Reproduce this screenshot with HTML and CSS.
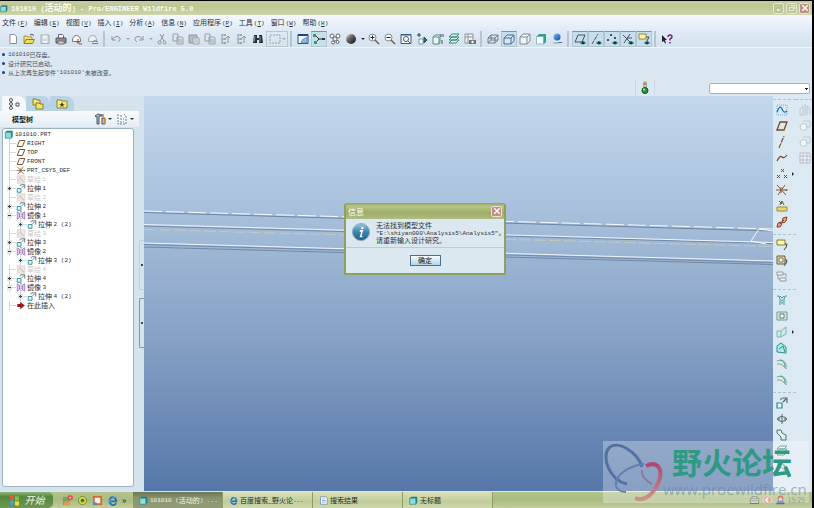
FILE: index.html
```
<!DOCTYPE html>
<html lang="zh-CN">
<head>
<meta charset="utf-8">
<title>101010 (活动的) - Pro/ENGINEER Wildfire 5.0</title>
<link rel="stylesheet" href="styles.css">
</head>
<body>
<svg class="defs" aria-hidden="true">
<defs>
<linearGradient id="ball" x1="0" y1="0" x2="1" y2="1"><stop offset="0" stop-color="#eee"/><stop offset=".4" stop-color="#666"/><stop offset="1" stop-color="#111"/></linearGradient>
<linearGradient id="blueball" x1="0" y1="0" x2="1" y2="1"><stop offset="0" stop-color="#7fb8ee"/><stop offset="1" stop-color="#0c4ca8"/></linearGradient>
<linearGradient id="info" x1="0" y1="0" x2="0" y2="1"><stop offset="0" stop-color="#9cc6dc"/><stop offset=".5" stop-color="#3a86b0"/><stop offset="1" stop-color="#1c5c8c"/></linearGradient>
<linearGradient id="loop" x1="0" y1="0" x2="0" y2="1"><stop offset="0" stop-color="#b0406c"/><stop offset="1" stop-color="#d08c84"/></linearGradient>
</defs>
<symbol id="new" viewBox="0 0 12 12"><path d="M3 1.500h4.500l2 2v7H3z" fill="#fff" stroke="#888f96"/></symbol>
<symbol id="open" viewBox="0 0 12 12"><path d="M1 10V3h3l1 1h4v2" fill="#f4e48c" stroke="#a89438"/><path d="M1 10.500l2-4h8.500l-2 4z" fill="#f6dc50" stroke="#8f8030"/><path d="M7 2q2-1.500 4 .5" fill="none" stroke="#555"/></symbol>
<symbol id="save" viewBox="0 0 12 12"><path d="M2 2h8v8.500H2z" fill="#d5dce1" stroke="#a4adb5"/><path d="M4 2.500h4v3H4zM4 8h4v2H4z" fill="#eef2f4"/></symbol>
<symbol id="print" viewBox="0 0 12 12"><path d="M3.500 5V1.500h4l1 1V5" fill="#fff" stroke="#667"/><path d="M1 5h10v5H1z" fill="#888d94" stroke="#555b62"/><path d="M3 8h6v3H3z" fill="#e7c2b9" stroke="#777"/></symbol>
<symbol id="mail" viewBox="0 0 12 12"><path d="M1.500 7a4 4.500 0 0 1 8 0v1.500h-8z" fill="#f6f7f5" stroke="#777"/><path d="M7 6v4M5.500 8.500L7 10.500l2-2M8 11h3" stroke="#a44" fill="none"/></symbol>
<symbol id="mail2" viewBox="0 0 12 12"><path d="M1.500 7a4 4.500 0 0 1 8 0v1.500h-8z" fill="#eef2f4" stroke="#a0a8ae"/><path d="M5 9q3-3 6 0M5 10.500h6" stroke="#789" fill="none"/></symbol>
<symbol id="undo" viewBox="0 0 12 12"><path d="M2 3v4h4M2 7q4-6 8-2 1 2-2 4" fill="none" stroke="#8c969e"/></symbol>
<symbol id="redo" viewBox="0 0 12 12"><path d="M10 3v4H6M10 7Q6 1 2 5q-1 2 2 4" fill="none" stroke="#8c969e"/></symbol>
<symbol id="cut" viewBox="0 0 12 12"><path d="M4 1l4 7M8 1L4 8" stroke="#8c969e" fill="none"/><circle cx="3.500" cy="9.500" r="1.500" fill="none" stroke="#8c969e"/><circle cx="8.500" cy="9.500" r="1.500" fill="none" stroke="#8c969e"/></symbol>
<symbol id="copy" viewBox="0 0 12 12"><path d="M1 1h5v7H1zM5 4h5l1 1v6H5z" fill="#dfe5e9" stroke="#98a1a8"/><path d="M6 7h4M6 9h4" stroke="#a4abb1"/></symbol>
<symbol id="paste" viewBox="0 0 12 12"><path d="M1 2h8v8H1z" fill="#b5bcc2" stroke="#8f989f"/><path d="M5 5h6v6H5z" fill="#eef1f3" stroke="#98a1a8"/><path d="M6 7h4M6 9h4" stroke="#a4abb1"/></symbol>
<symbol id="regen" viewBox="0 0 12 12"><path d="M2 1v10M2 2h2M2 6h2M2 10h2M8 10V3M6 5l2-2 2 2" fill="none" stroke="#8c969e"/><path d="M4 1h2v2H4zM4 5h2v2H4zM4 9h2v2H4z" fill="#9aa4ab"/></symbol>
<symbol id="find" viewBox="0 0 12 12"><path d="M2 2h3v3h2V2h3l1 8H7V7H5v3H1z" fill="#282c34"/><path d="M3 3l-1 6M8 3v6" stroke="#9299a0"/></symbol>
<symbol id="marquee" viewBox="0 0 12 12"><path d="M1 2h10v8H1z" fill="none" stroke="#98a2aa" stroke-dasharray="2 1"/></symbol>
<symbol id="repaint" viewBox="0 0 12 12"><path d="M1 1.500h10v9H1z" fill="#f5faff" stroke="#244c88"/><path d="M1 1h10v2H1z" fill="#1d438b"/><path d="M4 10q0-4 6-6v6z" fill="#8fbcdc" stroke="#4c7ca8" stroke-width=".6"/></symbol>
<symbol id="spin" viewBox="0 0 12 12"><path d="M2 2l4 4-4 4M6 6h4" fill="none" stroke="#333"/><path d="M0 1h3v3H0zM1 8h3v3H1z" fill="#2fa364"/><path d="M9 5h3v2H9z" fill="#333"/></symbol>
<symbol id="layers" viewBox="0 0 12 12"><g fill="#f4f6f8" stroke="#555c66" stroke-width=".9"><circle cx="3" cy="3" r="2"/><circle cx="9" cy="3" r="2"/><circle cx="6" cy="6" r="2"/><circle cx="4" cy="9.500" r="1.500"/><circle cx="8.500" cy="9" r="1.500"/></g></symbol>
<symbol id="sphere" viewBox="0 0 12 12"><circle cx="6" cy="6" r="5" fill="url(#ball)"/></symbol>
<symbol id="zin" viewBox="0 0 12 12"><circle cx="4.500" cy="4.500" r="3.500" fill="#f3f8fa" stroke="#808992"/><path d="M7 7l4 4" stroke="#86543c" stroke-width="1.500"/><path d="M2.500 4.500h4M4.500 2.500v4" stroke="#223"/></symbol>
<symbol id="zout" viewBox="0 0 12 12"><circle cx="4.500" cy="4.500" r="3.500" fill="#f3f8fa" stroke="#808992"/><path d="M7 7l4 4" stroke="#86543c" stroke-width="1.500"/><path d="M2.500 4.500h4" stroke="#223"/></symbol>
<symbol id="refit" viewBox="0 0 12 12"><path d="M1 1.500h10v9H1z" fill="#eff6fa" stroke="#345c88"/><path d="M1 1h10v1.500H1z" fill="#345c88"/><circle cx="6" cy="6" r="2.500" fill="#fff" stroke="#555"/><path d="M8 8l2 2" stroke="#86543c"/></symbol>
<symbol id="orient" viewBox="0 0 12 12"><path d="M3 6h4v5H3z" fill="#fff" stroke="#5c8c84" stroke-width=".8"/><path d="M3 0v4M1 2h4" stroke="#25495c"/><path d="M8 4l3 3-3 3z" fill="#277d70" stroke="#25495c"/></symbol>
<symbol id="views" viewBox="0 0 12 12"><path d="M1 4h6v7H1zM1 4l2-2h5v7l-1 2" fill="#e7f5f3" stroke="#5c8c84"/><path d="M9 1v3M11 1v3M10 7v4" stroke="#456"/></symbol>
<symbol id="stack" viewBox="0 0 12 12"><g fill="#dff1eb" stroke="#3d8577"><path d="M1 10l3-3h7l-3 3zM1 7l3-3h7L8 7zM1 4l3-3h7L8 4z"/></g></symbol>
<symbol id="viewmgr" viewBox="0 0 12 12"><path d="M1 1h8v9H1zM1 4h8M4 1v9" fill="#f1f4f5" stroke="#8b949b"/><path d="M5 7h7v4H5z" fill="#70767d"/><circle cx="8.500" cy="9" r="1.200" fill="#fff"/></symbol>
<symbol id="wire" viewBox="0 0 12 12"><path d="M1 5h7v5H1zM4 2h7v5H4zM1 5l3-3M8 5l3-3M8 10l3-3M1 10l3-3" fill="none" stroke="#66717b" stroke-width=".9"/></symbol>
<symbol id="hidden" viewBox="0 0 12 12"><path d="M1 5h7v6H1zM1 5l3-3h7v6l-3 3M8 5l3-3" fill="#d5e7f4" stroke="#4b6d94"/></symbol>
<symbol id="nohid" viewBox="0 0 12 12"><path d="M1 4h7v7H1zM1 4l3-3h7v7l-3 3M8 4l3-3" fill="#eef4f7" stroke="#838c96"/></symbol>
<symbol id="shade" viewBox="0 0 12 12"><path d="M2 3l2-2h7v8l-2 2H2z" fill="#339f94"/><path d="M1.500 3.500h7V11h-7z" fill="#effffc" stroke="#62a29c" stroke-width=".6"/></symbol>
<symbol id="enh" viewBox="0 0 12 12"><circle cx="6" cy="4" r="3.500" fill="url(#blueball)"/><path d="M7 9h4v1H7z" fill="#567"/><ellipse cx="5" cy="10" rx="3" ry="1" fill="#9cbfe0"/></symbol>
<symbol id="eye" viewBox="0 0 12 12"><path d="M6 10q3-4 6 0-3 3-6 0z" fill="#247d70"/><circle cx="9" cy="10" r="1" fill="#123"/></symbol>
<symbol id="dplane" viewBox="0 0 12 12"><path d="M1 9l3-7h7L8 9z" fill="none" stroke="#4a5260"/><use href="#eye"/></symbol>
<symbol id="daxis" viewBox="0 0 12 12"><path d="M2 11L8 1" fill="none" stroke="#4a5260" stroke-dasharray="4 1"/><use href="#eye"/></symbol>
<symbol id="dpoint" viewBox="0 0 12 12"><path d="M4 1l2 2M6 1L4 3M1 6l2 2M3 6L1 8M8 4l2 2M10 4L8 6" stroke="#4a5260"/><use href="#eye"/></symbol>
<symbol id="dcsys" viewBox="0 0 12 12"><path d="M1 2l7 7M8 1L2 10M5 5h5" fill="none" stroke="#4a5260"/><use href="#eye"/></symbol>
<symbol id="dnote" viewBox="0 0 12 12"><path d="M1 1h7v5H1z" fill="#fdf4a0" stroke="#8d8a45"/><path d="M8 4h3L9 8" fill="none" stroke="#444"/><use href="#eye"/></symbol>
<symbol id="help" viewBox="0 0 12 12"><path d="M1 2l5 5H4l1 3-1 .5L3 8 1 9z" fill="#221c2c"/><path d="M7 4q0-2 2-2t2 2q0 1-2 2v1.500M9 9v1.500" fill="none" stroke="#6c2c7c" stroke-width="1.500"/></symbol>
<symbol id="light" viewBox="0 0 8 14"><path d="M2.500 1h3v5h-3z" fill="#ddd1b8" stroke="#8c8474" stroke-width=".6"/><circle cx="4" cy="3" r="1" fill="#c05450"/><circle cx="4" cy="9.500" r="3" fill="#269934" stroke="#174d1f"/><circle cx="3" cy="8.500" r="1" fill="#baf4b5"/></symbol>
<symbol id="part" viewBox="0 0 12 12"><path d="M1 3l2-2h8v8l-2 2H1z" fill="#257f85"/><path d="M1 3h8v8H1z" fill="#8fdcdc" stroke="#2c858b" stroke-width=".8"/></symbol>
<symbol id="treetab" viewBox="0 0 12 12"><g fill="#fff" stroke="#4d555c"><path d="M3 4v5"/><circle cx="3" cy="2" r="1.500"/><circle cx="3" cy="6" r="1.500"/><circle cx="3" cy="10" r="1.500"/><path d="M8 5h3v3H8z"/></g></symbol>
<symbol id="folders" viewBox="0 0 12 12"><g fill="#f4e36c" stroke="#897c2c"><path d="M1 1h3l1 1h3v5H1z"/><path d="M4 5h3l1 1h3v5H4z"/></g></symbol>
<symbol id="fav" viewBox="0 0 12 12"><path d="M1 2h4l1 1h5v7H1z" fill="#f4eb7c" stroke="#898138"/><path d="M6 4l1 2h2L7 7l1 2-2-1-2 1 1-2-2-1h2z" fill="#473e1c"/></symbol>
<symbol id="tools" viewBox="0 0 12 12"><path d="M1 3l3-2 4 1v1H5v8H3V4zM9 1v3M8 5h3v6H8z" fill="#b6bdc1" stroke="#4d5660"/><path d="M10 5h1v6h-1z" fill="#d28b2f"/></symbol>
<symbol id="settings" viewBox="0 0 12 12"><path d="M2 1v10h8V3L8 1M4 3h3M4 6h4M4 9h4" fill="#f3f7f9" stroke="#72818c" stroke-dasharray="2 1"/></symbol>
<symbol id="plane" viewBox="0 0 12 12"><path d="M1 10l3-8h7L8 10z" fill="none" stroke="#7c4a28" stroke-width="1.300"/></symbol>
<symbol id="csys" viewBox="0 0 12 12"><path d="M1 1l9 10M9 1L2 11M0 6h10M5 3v6" fill="none" stroke="#845838"/><circle cx="10.500" cy="6" r="1" fill="#845838"/></symbol>
<symbol id="sketch" viewBox="0 0 12 12"><path d="M1 1h10v10H1z" fill="#eee8e6" stroke="#d8cfcc"/><path d="M2 8q2-6 4-2t4 2M4 2l5 7" fill="none" stroke="#c6bcb9"/></symbol>
<symbol id="extrude" viewBox="0 0 12 12"><path d="M1 6h5v5H1z" fill="#dff7f3" stroke="#308b8b" stroke-width="1.200"/><path d="M5 3V1M6 1h5v5M7 5l3-3" fill="none" stroke="#476276" stroke-width="1.100"/></symbol>
<symbol id="mirror" viewBox="0 0 12 12"><path d="M1 1l3 2v6l-3 2zM11 1L8 3v6l3 2z" fill="#ddc8ee" stroke="#9468ba"/><path d="M6 0v12" stroke="#4a346a" stroke-dasharray="2 1"/></symbol>
<symbol id="insert" viewBox="0 0 12 12"><path d="M1 4h4V1l6 5-6 5V8H1z" fill="#9b161c"/></symbol>
<symbol id="sk" viewBox="0 0 12 12"><path d="M1 1h10v10H1z" fill="#d5e9f7" stroke="#77aed4" stroke-dasharray="1 1"/><path d="M1 8q3-8 5-3t5 2" fill="none" stroke="#2471a6" stroke-width="1.300"/></symbol>
<symbol id="axis" viewBox="0 0 12 12"><path d="M3 12L8 0" stroke="#7c4a34" stroke-width="1.200" stroke-dasharray="5 1"/></symbol>
<symbol id="curve" viewBox="0 0 12 12"><path d="M1 9q3-6 5-4t5-2" fill="none" stroke="#7c4a34" stroke-width="1.200"/></symbol>
<symbol id="points" viewBox="0 0 12 12"><path d="M5 1l3 3M8 1L5 4M1 7l3 3M4 7l-3 3M8 7l3 3M11 7l-3 3" stroke="#6d4c38"/></symbol>
<symbol id="ruler" viewBox="0 0 12 12"><path d="M1 7h10v4H1z" fill="#e8d577" stroke="#9a8a3c"/><path d="M4 5l2-4 2 4M3 1l3 3" fill="none" stroke="#64533c"/></symbol>
<symbol id="link" viewBox="0 0 12 12"><path d="M1 11l1-4 3-1 1 2-2 3zM6 6l1-4 4-1-1 4-2 2z" fill="#e1a583" stroke="#7e452c"/><path d="M4 8l4-4" stroke="#7e452c"/></symbol>
<symbol id="note" viewBox="0 0 12 12"><path d="M1 1h8v5H1z" fill="#fdf79e" stroke="#817f43"/><path d="M9 5h2q0 3-3 6" fill="none" stroke="#444"/></symbol>
<symbol id="note2" viewBox="0 0 12 12"><path d="M1 1h8v8H1z" fill="#e8dda0" stroke="#5e5b45"/><path d="M3 3h4v4H3z" fill="#f9f3c4" stroke="#777"/><path d="M9 5h2q0 3-3 6" fill="none" stroke="#444"/></symbol>
<symbol id="boxes" viewBox="0 0 12 12"><path d="M1 1h6v3H1zM4 7h6v3H4zM2 4v4h2M7 3h3v3" fill="#eef1f1" stroke="#949da0"/></symbol>
<symbol id="hole" viewBox="0 0 12 12"><path d="M1 2h2l1 3v6M11 2H9L8 5v6M4 2l2 2 2-2M6 5v5" fill="none" stroke="#3e9c9d"/></symbol>
<symbol id="shell" viewBox="0 0 12 12"><path d="M1 2h10v8H1z" fill="#d3e2df" stroke="#7c9896"/><path d="M4 4h4v4H4z" fill="#fff" stroke="#587c79"/></symbol>
<symbol id="rib" viewBox="0 0 12 12"><path d="M1 5h4v6H1zM5 5l5-4v7l-5 3" fill="#c7f0e5" stroke="#8fb0ac"/></symbol>
<symbol id="draft" viewBox="0 0 12 12"><path d="M1 10V4l4-3 5 4v6zM3 7l4-3 2 6" fill="#aeebe6" stroke="#318d91"/></symbol>
<symbol id="round" viewBox="0 0 12 12"><path d="M1 3q7-3 9 4v4q-4-6-9-5" fill="#dceee2" stroke="#8aa098"/><path d="M4 2q5 1 5 7" fill="none" stroke="#39a492"/></symbol>
<symbol id="revolve" viewBox="0 0 12 12"><path d="M1 6q5-5 10 0-5 5-10 0zM6 1v10" fill="none" stroke="#536d72"/><path d="M3 4v4M9 4v4" stroke="#536d72"/></symbol>
<symbol id="sweep" viewBox="0 0 12 12"><path d="M1 1h4l1 3 4 2v5H5V8L1 4z" fill="#e1f0ed" stroke="#55736e"/></symbol>
<symbol id="grid" viewBox="0 0 12 12"><path d="M1 1h10v10H1zM4 1v10M8 1v10M1 4h10M1 8h10" fill="#f0f4f6" stroke="#b4bec5"/></symbol>
<symbol id="gmirror" viewBox="0 0 12 12"><path d="M1 11V5l3-3v9zM11 11V5L8 2v9M6 0v12" fill="none" stroke="#bcc6cd"/></symbol>
<symbol id="merge" viewBox="0 0 12 12"><circle cx="4.500" cy="7" r="3.500" fill="#eef3f6" stroke="#bec7cd"/><path d="M4 1h7v6H8" fill="none" stroke="#bec7cd"/></symbol>
<symbol id="xp" viewBox="0 0 12 12"><path d="M1 2q2-1 4 0v4q-2-1-4 0z" fill="#e45b34"/><path d="M6 2q2 1 4 0v4q-2 1-4 0z" fill="#7fc64a"/><path d="M1 7q2-1 4 0v4q-2-1-4 0z" fill="#5596df"/><path d="M6 7q2 1 4 0v4q-2 1-4 0z" fill="#f5d546"/></symbol>
<symbol id="ie" viewBox="0 0 12 12"><path d="M10 9q-2 3-5 1.500T3 5q1-3 4-2.500T10 7H4" fill="none" stroke="#2672b8" stroke-width="2"/><path d="M1 10Q4 3 11 1" fill="none" stroke="#78b4db"/></symbol>
<symbol id="qq" viewBox="0 0 12 12"><path d="M1 2h7v9H1z" fill="#74a368"/><path d="M2 7h7v4H2z" fill="#d79c4c"/><circle cx="9" cy="3" r="3" fill="#db5848"/><path d="M8 3h2" stroke="#fff"/></symbol>
<symbol id="yellow" viewBox="0 0 12 12"><circle cx="6" cy="6" r="4.500" fill="#e3d839" stroke="#5e9137"/><path d="M4 6h4M6 4v4" stroke="#287338" stroke-width="2"/></symbol>
<symbol id="red" viewBox="0 0 12 12"><path d="M1 1h10v10H1z" fill="#d96838"/><path d="M3 3h6v6H3z" fill="#f6f7e8"/><path d="M1 8h4v3H1z" fill="#4a8ecd"/></symbol>
<symbol id="doc" viewBox="0 0 12 12"><path d="M2 1h7l2 2v8H2z" fill="#f2f7fb" stroke="#698bb3"/><path d="M4 4h4M4 6h5M4 8h5" stroke="#89a8c9"/></symbol>
<symbol id="kbd" viewBox="0 0 12 12"><path d="M3 4V2h6v2M1 4.500h10V10H1z" fill="#d8d9cc" stroke="#5b5c50"/><path d="M2 7h8" stroke="#5b5c50"/></symbol>
<symbol id="back" viewBox="0 0 12 12"><circle cx="6" cy="6" r="5" fill="#cf8e72" stroke="#efd1bc"/><path d="M7 3L4 6l3 3" fill="none" stroke="#fff" stroke-width="1.500"/></symbol>
<symbol id="user" viewBox="0 0 12 12"><circle cx="6" cy="4" r="3.500" fill="#bb4d3b"/><path d="M1 11q0-5 5-5t5 5z" fill="#5072ac"/><circle cx="6" cy="5" r="2" fill="#f0bda0"/></symbol>
</svg>

<header class="titlebar">
  <svg class="ic"><use href="#part"/></svg>
  <h1><span class="m">101010 (</span>活动的<span class="m">) - Pro/ENGINEER Wildfire 5.0</span></h1>
  <div class="winbtns"><button aria-label="最小化"><svg viewBox="0 0 12 12"><path d="M3 9h4" stroke="#fff" stroke-width="2"/></svg></button><button aria-label="还原"><svg viewBox="0 0 12 12"><path d="M4 2h6v5H8M2 5h6v5H2z" fill="none" stroke="#fff"/></svg></button><button class="close" aria-label="关闭"><svg viewBox="0 0 12 12"><path d="M2 2l8 8M10 2l-8 8" stroke="#fff" stroke-width="2"/></svg></button></div>
</header>

<nav class="menubar">
  <a href="#">文件<span class="m">(<u>F</u>)</span></a><a href="#">编辑<span class="m">(<u>E</u>)</span></a><a href="#">视图<span class="m">(<u>V</u>)</span></a><a href="#">插入<span class="m">(<u>I</u>)</span></a><a href="#">分析<span class="m">(<u>A</u>)</span></a><a href="#">信息<span class="m">(<u>N</u>)</span></a><a href="#">应用程序<span class="m">(<u>P</u>)</span></a><a href="#">工具<span class="m">(<u>T</u>)</span></a><a href="#">窗口<span class="m">(<u>W</u>)</span></a><a href="#">帮助<span class="m">(<u>H</u>)</span></a>
</nav>

<div class="toolbar" role="toolbar">
  <div class="grp"><button aria-label="新建"><svg><use href="#new"/></svg></button><button aria-label="打开"><svg><use href="#open"/></svg></button><button aria-label="保存"><svg><use href="#save"/></svg></button><button aria-label="打印"><svg><use href="#print"/></svg></button><button aria-label="发送"><svg><use href="#mail"/></svg></button><button aria-label="发送链接"><svg><use href="#mail2"/></svg></button></div>
  <div class="grp"><button aria-label="撤消"><svg><use href="#undo"/></svg></button><button class="dd off" aria-label="撤消列表"></button><button aria-label="重做"><svg><use href="#redo"/></svg></button><button class="dd off" aria-label="重做列表"></button><button aria-label="剪切"><svg><use href="#cut"/></svg></button><button aria-label="复制"><svg><use href="#copy"/></svg></button><button aria-label="粘贴"><svg><use href="#paste"/></svg></button><button aria-label="选择性粘贴"><svg><use href="#copy"/></svg></button><button aria-label="再生"><svg><use href="#regen"/></svg></button><button aria-label="再生管理器"><svg><use href="#regen"/></svg></button><button aria-label="查找"><svg><use href="#find"/></svg></button><button class="sel" aria-label="选择"><svg><use href="#marquee"/></svg><i class="off"></i></button></div>
  <div class="grp"><button aria-label="重画"><svg><use href="#repaint"/></svg></button><button class="on" aria-label="旋转中心"><svg><use href="#spin"/></svg></button><button aria-label="定向模式"><svg><use href="#layers"/></svg></button><button aria-label="外观库"><svg><use href="#sphere"/></svg></button><button class="dd" aria-label="外观列表"></button><button aria-label="放大"><svg><use href="#zin"/></svg></button><button aria-label="缩小"><svg><use href="#zout"/></svg></button><button aria-label="重新调整"><svg><use href="#refit"/></svg></button><button aria-label="重定向"><svg><use href="#orient"/></svg></button><button aria-label="视图列表"><svg><use href="#views"/></svg></button><button aria-label="层"><svg><use href="#stack"/></svg></button><button aria-label="视图管理器"><svg><use href="#viewmgr"/></svg></button></div>
  <div class="grp"><button aria-label="线框"><svg><use href="#wire"/></svg></button><button class="on" aria-label="隐藏线"><svg><use href="#hidden"/></svg></button><button aria-label="消隐"><svg><use href="#nohid"/></svg></button><button aria-label="着色"><svg><use href="#shade"/></svg></button><button aria-label="增强的真实感"><svg><use href="#enh"/></svg></button></div>
  <div class="grp"><button class="on" aria-label="平面显示"><svg><use href="#dplane"/></svg></button><button class="on" aria-label="轴显示"><svg><use href="#daxis"/></svg></button><button class="on" aria-label="点显示"><svg><use href="#dpoint"/></svg></button><button class="on" aria-label="坐标系显示"><svg><use href="#dcsys"/></svg></button><button class="on" aria-label="注释显示"><svg><use href="#dnote"/></svg></button></div>
  <div class="grp"><button aria-label="帮助"><svg><use href="#help"/></svg></button></div>
</div>

<section class="messages">
  <ul><li><span class="m">101010</span>已存盘。</li><li>设计研究已启动。</li><li>从上次再生起零件<span class="m">'101010'</span>未被改变。</li></ul>
  <div class="status"><span class="lamp"><svg><use href="#light"/></svg></span><select aria-label="过滤器"><option></option></select></div>
</section>

<main class="work">
  <aside class="nav">
    <div class="tabs"><button class="cur" aria-label="模型树"><svg class="ic"><use href="#treetab"/></svg></button><button aria-label="文件夹"><svg class="ic"><use href="#folders"/></svg></button><button aria-label="收藏夹"><svg class="ic"><use href="#fav"/></svg></button></div>
    <div class="navhead"><h2>模型树</h2><button aria-label="显示"><svg class="ic"><use href="#tools"/></svg><i></i></button><button aria-label="设置"><svg class="ic"><use href="#settings"/></svg><i></i></button></div>
    <div class="treewrap">
    <ul class="tree">
      <li class="root"><svg><use href="#part"/></svg><span class="m">101010.PRT</span></li>
      <li><b></b><svg><use href="#plane"/></svg><span class="m">RIGHT</span></li>
      <li><b></b><svg><use href="#plane"/></svg><span class="m">TOP</span></li>
      <li><b></b><svg><use href="#plane"/></svg><span class="m">FRONT</span></li>
      <li><b></b><svg><use href="#csys"/></svg><span class="m">PRT_CSYS_DEF</span></li>
      <li class="dim"><b></b><svg><use href="#sketch"/></svg>草绘 <span class="m">1</span></li>
      <li><b class="plus"></b><svg><use href="#extrude"/></svg>拉伸 <span class="m">1</span></li>
      <li class="dim"><b></b><svg><use href="#sketch"/></svg>草绘 <span class="m">2</span></li>
      <li><b class="plus"></b><svg><use href="#extrude"/></svg>拉伸 <span class="m">2</span></li>
      <li><b class="minus"></b><svg><use href="#mirror"/></svg>镜像 <span class="m">1</span></li>
      <li class="sub"><b class="plus"></b><svg><use href="#extrude"/></svg>拉伸 <span class="m">2 (2)</span></li>
      <li class="dim"><b></b><svg><use href="#sketch"/></svg>草绘 <span class="m">3</span></li>
      <li><b class="plus"></b><svg><use href="#extrude"/></svg>拉伸 <span class="m">3</span></li>
      <li><b class="minus"></b><svg><use href="#mirror"/></svg>镜像 <span class="m">2</span></li>
      <li class="sub"><b class="plus"></b><svg><use href="#extrude"/></svg>拉伸 <span class="m">3 (2)</span></li>
      <li class="dim"><b></b><svg><use href="#sketch"/></svg>草绘 <span class="m">4</span></li>
      <li><b class="plus"></b><svg><use href="#extrude"/></svg>拉伸 <span class="m">4</span></li>
      <li><b class="minus"></b><svg><use href="#mirror"/></svg>镜像 <span class="m">3</span></li>
      <li class="sub"><b class="plus"></b><svg><use href="#extrude"/></svg>拉伸 <span class="m">4 (2)</span></li>
      <li><b></b><svg><use href="#insert"/></svg>在此插入</li>
    </ul>
    <div class="splitter"><span class="faint"></span><span></span></div>
    </div>
  </aside>

  <section class="canvas">
    <svg class="model" viewBox="0 0 629 60" preserveAspectRatio="none" fill="none">
      <path d="M0 4.500L629 23" stroke="#6f86a3"/>
      <path d="M0 3L629 21" stroke="#f4f8fa" stroke-dasharray="18 4"/>
      <path d="M0 18L629 35.500" stroke="#7188a8"/>
      <path d="M0 16.500L629 34.500" stroke="#eef4fa"/>
      <path d="M0 21.500L629 38.500" stroke="#c5cbbb" stroke-dasharray="12 3"/>
      <path d="M0 35L629 53" stroke="#eef4fa"/>
      <path d="M0 36.500L629 54.500" stroke="#7188a8"/>
      <path d="M0 39L629 56.500" stroke="#7188a8"/>
      <path d="M629 23L615 21 607 33 622 36" stroke="#f4f8fa"/>
    </svg>
    <div class="dialog" role="dialog" aria-labelledby="dt">
      <div class="dtitle"><h2 id="dt">信息</h2><button class="close" aria-label="关闭"><svg viewBox="0 0 12 12"><path d="M2 2l8 8M10 2l-8 8" stroke="#fff" stroke-width="2"/></svg></button></div>
      <div class="dbody"><svg viewBox="0 0 20 20"><circle cx="10" cy="10" r="9.500" fill="url(#info)" stroke="#8fa8b8"/><path d="M9 8.500h2.500L9.500 15h2M8.500 9h2" fill="none" stroke="#fff" stroke-width="1.500"/><circle cx="11.500" cy="5.500" r="1.400" fill="#fff"/></svg>
      <p>无法找到模型文件<br><span class="m">"E:\shiyan000\Analysis5\Analysis5"</span>。<br>请重新输入设计研究。</p></div>
      <div class="dfoot"><button>确定</button></div>
    </div>
  </section>

  <aside class="features">
    <div class="col">
      <div><button aria-label="草绘"><svg><use href="#sk"/></svg></button><button aria-label="平面"><svg><use href="#plane"/></svg></button><button aria-label="轴"><svg><use href="#axis"/></svg></button><button aria-label="曲线"><svg><use href="#curve"/></svg></button><button class="more" aria-label="点"><svg><use href="#points"/></svg></button><button aria-label="坐标系"><svg><use href="#csys"/></svg></button><button aria-label="分析"><svg><use href="#ruler"/></svg></button><button aria-label="参照"><svg><use href="#link"/></svg></button></div>
      <div><button aria-label="注释"><svg><use href="#note"/></svg></button><button aria-label="传播"><svg><use href="#note2"/></svg></button><button aria-label="替代"><svg><use href="#boxes"/></svg></button></div>
      <div><button aria-label="孔"><svg><use href="#hole"/></svg></button><button aria-label="壳"><svg><use href="#shell"/></svg></button><button class="more" aria-label="筋"><svg><use href="#rib"/></svg></button><button aria-label="拔模"><svg><use href="#draft"/></svg></button><button aria-label="倒圆角"><svg><use href="#round"/></svg></button><button aria-label="倒角"><svg><use href="#round"/></svg></button></div>
      <div><button aria-label="拉伸"><svg><use href="#extrude"/></svg></button><button aria-label="旋转"><svg><use href="#revolve"/></svg></button><button aria-label="扫描"><svg><use href="#sweep"/></svg></button><button aria-label="混合"><svg><use href="#stack"/></svg></button><button aria-label="造型"><svg><use href="#round"/></svg></button></div>
    </div>
    <div class="col second"><div><button aria-label="镜像"><svg><use href="#gmirror"/></svg></button><button aria-label="合并"><svg><use href="#merge"/></svg></button><button aria-label="修剪"><svg><use href="#merge"/></svg></button><button aria-label="阵列"><svg><use href="#grid"/></svg></button></div></div>
  </aside>
</main>

<footer class="taskbar">
  <button class="start"><svg class="ic"><use href="#xp"/></svg>开始</button>
  <div class="quick"><a href="#" aria-label="QQ"><svg><use href="#qq"/></svg></a><a href="#" aria-label="360"><svg><use href="#yellow"/></svg></a><a href="#" aria-label="桌面"><svg><use href="#red"/></svg></a><a href="#" aria-label="IE"><svg><use href="#ie"/></svg></a><span>»</span></div>
  <div class="tasks"><button class="cur"><svg><use href="#part"/></svg><span class="m">101010 (</span>活动的<span class="m">) ...</span></button><button><svg><use href="#ie"/></svg>百度搜索_野火论<span class="m">...</span></button><button><svg><use href="#doc"/></svg>搜索结果</button><button><svg><use href="#part"/></svg>无标题</button></div>
  <div class="tray"><svg><use href="#kbd"/></svg><svg><use href="#back"/></svg><svg><use href="#user"/></svg><time>15:25</time></div>
</footer>

<div class="watermark">
  <svg viewBox="0 0 60 60" fill="none"><path d="M39 24C34 8 14-3 6 5s0 32 18 36" stroke="#4c6ca0" stroke-width="3"/><path d="M41 21C26 23 11 32 13 43q2 6 10 6" stroke="#5f7bae" stroke-width="2"/><path d="M43 23c12-6 17 4 13 15S42 60 32 55" stroke="url(#loop)" stroke-width="4"/><path d="M39 27c-1 6 5 12 10 14" stroke="#8d7298" stroke-width="2"/></svg>
  <p><strong>野火论坛</strong><span>www.proewildfire.cn</span></p>
</div>
</body>
</html>
```
FILE: styles.css
```
* { box-sizing: border-box; }
body {
  margin: 0; min-height: 100vh; display: flex; flex-direction: column; position: relative;
  border-top: 1px solid #000; border-right: 2px solid #000;
  background: #dbe8f2; color: #2a3138;
  font: 7px/9px "Noto Sans CJK SC", sans-serif;
}
.m { font-family: "Liberation Mono", monospace; font-size: 6px; }
.defs { position: absolute; width: 0; height: 0; }
button { border: 0; padding: 0; margin: 0; background: none; font: inherit; color: inherit; display: flex; align-items: center; justify-content: center; }
h1, h2, p, ul { margin: 0; padding: 0; list-style: none; font-size: inherit; }
svg { flex: none; display: block; width: 12px; height: 12px; }
a { color: inherit; text-decoration: none; }

.titlebar { display: flex; align-items: center; height: 14px; gap: 3px; background: linear-gradient(#c5cba5, #bcc792 40%, #cdd5ac); color: #fafbf2; }
.titlebar svg.ic { width: 8px; height: 9px; }
.titlebar h1 { flex: 1; font-size: 9px; line-height: 12px; font-weight: 700; }
.titlebar .m { font-size: 7px; }
.winbtns { display: flex; gap: 2px; padding-right: 2px; }
.winbtns button, .dtitle button { width: 11px; height: 11px; border: 1px solid #e5e9d0; border-radius: 2px; background: #bcc49a; }
.winbtns svg, .dtitle svg { width: 8px; height: 8px; }
.winbtns button.close, .dtitle button.close { background: #c08f86; border-color: #eee0d8; }

.menubar { display: flex; gap: 6px; align-items: center; height: 15px; padding: 0 2px; background: linear-gradient(#f4f8fd, #e1ebf5); }
.menubar .m { padding-left: 1px; }

.toolbar { display: flex; height: 18px; align-items: center; padding-left: 5px; background: linear-gradient(#e1ebf5, #d3e2ee); border-bottom: 1px solid #eff6fa; }
.grp { display: flex; align-items: center; }
.grp + .grp { border-left: 2px solid #b4c5d3; margin-left: 2px; padding-left: 3px; }
.grp button { width: 16px; height: 16px; }
.grp button.on { border: 1px solid #b5c4d2; border-top-color: #7f93a6; background: #c7deed; }
.grp button.dd { width: 7px; }
.grp .dd::after, i { content: ""; border: 2px solid transparent; border-top-color: #28303a; border-bottom: 0; }
.grp .off::after, i.off { border-top-color: #9ba7b0; }
.grp button.sel { width: 22px; border: 1px solid #b9c6d0; gap: 1px; }

.messages { height: 48px; color: #47525e; font-size: 6px; }
.messages ul { padding: 2px 2px 0; height: 32px; }
.messages li { line-height: 9px; display: flex; align-items: center; }
.messages li::before { content: ""; width: 3px; height: 3px; border-radius: 50%; background: #1c3c94; margin-right: 3px; }
.status { display: flex; justify-content: flex-end; align-items: center; gap: 54px; padding-right: 2px; height: 16px; }
.lamp { border: 1px solid #c9d5de; border-width: 0 1px; padding: 0 5px; }
.lamp svg { width: 8px; height: 14px; }
.status select { appearance: none; width: 101px; height: 11px; margin: 0; border: 1px solid #9db3c5; border-radius: 2px; background: linear-gradient(#222, #222) 95px 4px / 3px 1px no-repeat, linear-gradient(#222, #222) 96px 5px / 1px 1px no-repeat #fff; font-size: 7px; padding: 0; }

.work { flex: 1; display: flex; min-height: 0; }
.nav { width: 144px; display: flex; flex-direction: column; background: #d5e3ed; }
.tabs { display: flex; height: 15px; padding-left: 2px; }
.tabs button { width: 24px; border-radius: 2px 8px 0 0; background: #b9d3e6; }
.tabs button.cur { background: #f5f9fc; }
.navhead { display: flex; align-items: center; height: 16px; margin-right: 5px; padding: 0 5px 0 12px; gap: 4px; background: linear-gradient(#f8fbfd, #e4edf5); }
.navhead h2 { flex: 1; font-weight: 700; color: #151c24; }
.navhead button { gap: 2px; }
.treewrap { flex: 1; display: flex; gap: 5px; padding: 1px 0 4px 2px; }
.tree { flex: 1; border: 1px solid #9bb1c4; border-radius: 3px; background: #fff; padding: 1px 0 0 1px; }
.tree li { display: flex; align-items: center; height: 9px; padding-left: 2px; white-space: pre; line-height: 9px; }
.tree li svg { width: 10px; height: 9px; margin-right: 1px; }
.tree li.root { padding-left: 0; }
.tree li b { width: 10px; height: 9px; background: linear-gradient(#cdd2d6, #cdd2d6) 3px 0 / 1px 9px no-repeat, linear-gradient(#d5d9dc, #d5d9dc) 3px 4px / 7px 1px no-repeat; }
.tree li b::before { content: ""; display: block; width: 5px; height: 5px; margin: 2px 1px; }
.tree b.minus::before { background: linear-gradient(#39444f, #39444f) 1px 2px / 3px 1px no-repeat #dfe5e9; }
.tree b.plus::before { background: linear-gradient(#39444f, #39444f) 1px 2px / 3px 1px no-repeat, linear-gradient(#39444f, #39444f) 2px 1px / 1px 3px no-repeat #dfe5e9; }
.tree li.sub { padding-left: 13px; }
.tree li.dim { color: #c9c9c9; }
.splitter { width: 5px; display: flex; flex-direction: column; gap: 8px; padding-top: 112px; }
.splitter span { height: 50px; border: 1px solid #8299ac; border-right: 0; border-radius: 2px 0 0 2px; background: radial-gradient(circle, #3c4c60 1px, transparent 1px); }
.splitter span.faint { border-color: #c2d0dc; }

.canvas { flex: 1; position: relative; background: linear-gradient(#c3d8ec, #a9c1dc 28%, #819dc2 65%, #5677a9); }
.model { position: absolute; left: 0; top: 112px; width: 100%; height: 60px; }
.dialog { position: absolute; left: 200px; top: 107px; width: 162px; border: 2px solid #8fa05f; border-top: 0; border-radius: 3px 3px 0 0; background: #dbe8ef; }
.dtitle { display: flex; align-items: center; justify-content: space-between; height: 16px; padding: 0 2px; background: linear-gradient(#8fa05f, #b9c583 20%, #9dad6a 60%, #b0bc80); color: #fff; }
.dtitle h2 { font-weight: 400; font-size: 8px; }
.dbody { display: flex; gap: 6px; padding: 3px 5px 5px 6px; line-height: 7px; border-bottom: 1px solid #bccbd4; height: 29px; }
.dbody svg { width: 18px; height: 20px; }
.dbody p { white-space: nowrap; }
.dfoot { display: flex; justify-content: center; padding: 7px 0 7px; }
.dfoot button { width: 31px; height: 11px; border: 1px solid #4c7188; background: linear-gradient(#f8fcff, #b2d3e6); line-height: 9px; color: #111; }

.features { width: 39px; display: flex; background: #dbe9f2; padding-top: 3px; }
.col { width: 23px; }
.col div { border-top: 1px dashed #b4c2cd; padding: 2px 0 4px; }
.col button { position: relative; width: 17px; height: 16px; }
.col .more::after { content: ""; position: absolute; right: -4px; top: 6px; border: 2px solid transparent; border-left-color: #25303b; border-right: 0; }
.col.second { width: 16px; }

.taskbar { display: flex; align-items: center; height: 17px; border-top: 1px solid #e1e8c4; background: linear-gradient(#b4c48c, #a9bb82 50%, #c2ce9c); }
.start { align-self: stretch; width: 53px; gap: 4px; border-radius: 0 5px 5px 0; background: linear-gradient(#8fb474, #55863f 30%, #6d9a52); color: #f3f7e9; font-size: 10px; font-style: italic; line-height: 14px; }
.quick { display: flex; align-items: center; gap: 4px; width: 80px; padding-left: 9px; color: #23301c; font-size: 9px; }
.quick svg { width: 11px; height: 11px; }
.tasks { display: flex; flex: 1; align-self: stretch; }
.tasks button { width: 90px; justify-content: flex-start; padding-left: 6px; background: linear-gradient(#d8dfb7, #c2cd9b 60%, #cfd8ac); border-right: 1px solid #8d9f69; white-space: pre; color: #29301e; }
.tasks svg { width: 9px; height: 9px; margin-right: 2px; }
.tasks button.cur { background: linear-gradient(#6c7853, #8a946f 40%, #929c76); color: #f3f5e8; }
.tray { display: flex; align-items: center; gap: 2px; padding-right: 7px; }
.tray svg { width: 11px; height: 10px; }
.tray time { font-size: 7px; color: #6a7159; }

.watermark { position: absolute; right: 3px; bottom: 5px; display: flex; width: 206px; height: 62px; background: rgba(255, 255, 255, .3); pointer-events: none; }
.watermark svg { width: 60px; height: 60px; margin-top: 2px; opacity: .9; }
.watermark p { display: flex; flex-direction: column; }
.watermark strong { font-size: 30px; line-height: 40px; padding-left: 9px; color: #2f9a84; font-weight: 700; }
.watermark span { font: 15px/16px "Open Sans", sans-serif; color: rgba(100, 140, 175, .6); }
```
